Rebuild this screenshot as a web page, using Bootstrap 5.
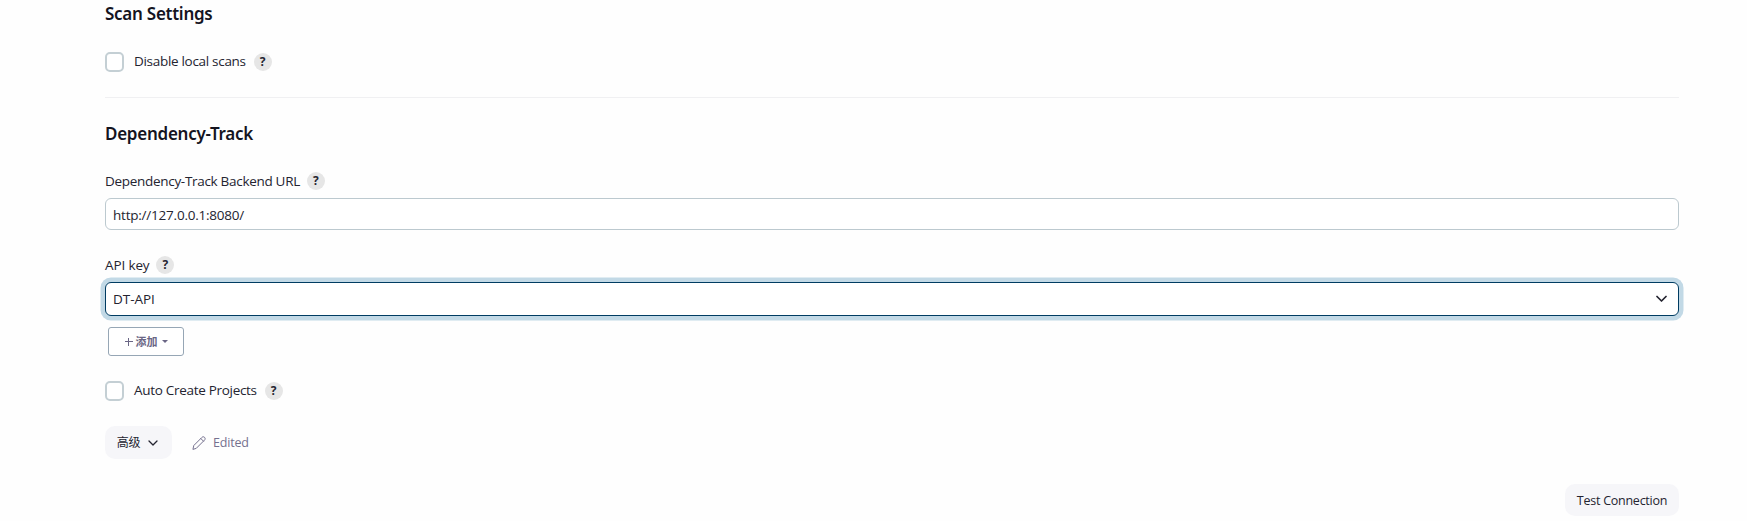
<!DOCTYPE html>
<html lang="en">
<head>
<meta charset="utf-8">
<title>Scan Settings</title>
<link href="https://cdn.jsdelivr.net/npm/bootstrap@5.3.0/dist/css/bootstrap.min.css" rel="stylesheet">
<style>
body{font:13.5px/20px "Open Sans","Noto Sans CJK SC",sans-serif;color:#242430;background:#fefefe;overflow:hidden;letter-spacing:-.3px}
.settings{height:521px;padding:2px 68px 0 105px}
.title{font:600 17px/24px "Noto Sans",sans-serif;margin:0;letter-spacing:-.26px;color:#14141f}
.line{height:20px}
.tick{width:19px;height:20px;border:2px solid #c4cfd4;border-radius:5px;margin:0 10px 0 0;appearance:none;background:#fff}
.tick + span{padding-bottom:2px}
.help{width:18px;height:18px;border-radius:50%;background:#e6e6e6;font-size:12px;line-height:18px;font-weight:700;text-align:center;letter-spacing:0;margin-left:7px}
.tick ~ .help{margin-left:8px}
.rule{height:1px;background:#f0f0f2;margin:27px 0 24px}
.entry{border:1px solid #bcc9cf;border-radius:6px;padding:1px 7px 0;height:32px;color:inherit;letter-spacing:-.22px;background:#fff;margin-top:7px}
.picker{height:34px;border:1px solid #003c62;border-radius:6px;padding:0 11px 0 7px;box-shadow:0 0 0 4.5px #c2d9e6;background:#fff;letter-spacing:-.05px;margin-top:7px}
.add{height:29px;width:76px;margin:11px 0 0 3px;border:1px solid #96a6b5;border-radius:3px;background:#fff;color:#6a6685;font-size:11px;font-weight:700;padding:0}
.add span:first-of-type{margin:0 4px 0 3px}
.soft{background:#f6f6f9;border:0;border-radius:10px;color:inherit;padding:0;font-size:12.5px;letter-spacing:-.25px}
.advanced{width:67px;height:33px;padding-right:2px}
.test{width:114px;height:32px;margin-top:25px;padding-top:1px}
.arrow{border:3px solid transparent;border-top-color:#6a6685;border-bottom:0}
.edited{color:#75718f;font-size:12.5px;letter-spacing:-.2px;margin-left:20px}
svg{fill:none;stroke:currentColor;stroke-linecap:round;stroke-linejoin:round}
</style>
</head>
<body>
<form class="settings d-flex flex-column">
  <h2 class="title">Scan Settings</h2>
  <div class="line d-flex align-items-center mt-4 position-relative" style="top:2px"><input type="checkbox" class="tick"><span>Disable local scans</span><span class="help">?</span></div>
  <div class="rule"></div>
  <h2 class="title">Dependency-Track</h2>
  <div class="line d-flex align-items-center" style="margin-top:25px"><span>Dependency-Track Backend URL</span><span class="help">?</span></div>
  <input class="entry w-100" value="http://127.0.0.1:8080/">
  <div class="line d-flex align-items-center" style="margin-top:25px"><span style="letter-spacing:-.13px">API key</span><span class="help">?</span></div>
  <div class="picker d-flex align-items-center justify-content-between"><span>DT-API</span>
    <svg width="11" height="8" stroke-width="1.7"><path d="M1 1.5 5.5 6 10 1.5"/></svg></div>
  <button type="button" class="add d-flex align-items-center justify-content-center">
    <svg width="8" height="8" stroke-width="1"><path d="M0 3.5h8M3.5 0v8"/></svg><span>添加</span><span class="arrow"></span></button>
  <div class="line d-flex align-items-center" style="margin-top:25px"><input type="checkbox" class="tick"><span>Auto Create Projects</span><span class="help">?</span></div>
  <div class="d-flex align-items-center" style="margin-top:25px">
    <button type="button" class="soft advanced d-flex align-items-center justify-content-center"><span style="font-size:12px">高级</span>
      <svg class="ms-2" width="10" height="8" stroke-width="1.3"><path d="M1 2 5 6 9 2"/></svg></button>
    <span class="edited d-flex align-items-center">
      <svg width="14" height="14" stroke-width="1"><path d="M1 13 1.8 9.5 9.8 1.5C10.6.6 11.8.5 12.6 1.4 13.4 2.2 13.3 3.3 12.5 4.1L4.5 12.1ZM8.8 2.5 11.5 5.2"/></svg><span style="margin-left:7px">Edited</span></span>
  </div>
  <button type="button" class="soft test align-self-end">Test Connection</button>
</form>
<script src="https://cdn.jsdelivr.net/npm/bootstrap@5.3.0/dist/js/bootstrap.bundle.min.js"></script>
</body>
</html>
